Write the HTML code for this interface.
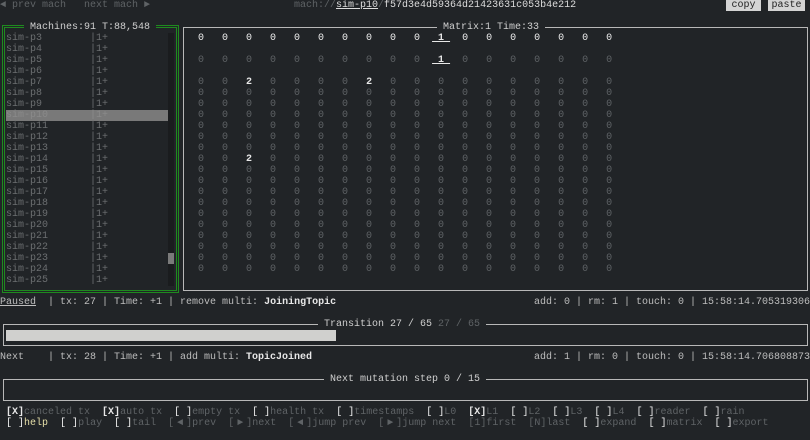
<!DOCTYPE html>
<html><head><meta charset="utf-8"><style>
body{margin:0;width:810px;height:440px;background:#212427;overflow:hidden;position:relative;font-family:"Liberation Mono",monospace;font-size:10px;line-height:11px;color:#bdbdbd}
.t{position:absolute;white-space:pre;}
.d{color:#5f6366}
.dm{color:#6b6e70}
.w{color:#e8e8e8;font-weight:bold}
.b{color:#f0f0f0}
.u{text-decoration:underline}
.a{display:inline-block;width:12px;text-align:center}
.box{position:absolute;border:1px solid #b8b8b8;box-sizing:border-box}
.ttl{position:absolute;background:#212427;white-space:pre;color:#cfcfcf;padding:0 6px}
.btn{position:absolute;background:#d4d4d4;color:#222;white-space:pre;height:11px}
</style></head><body>
<div class="t d" style="left:0;top:0">◄ prev mach   next mach ►</div>
<div class="t" style="left:294px;top:0"><span class="d">mach://</span><span class="u" style="color:#ddd">sim-p10</span><span class="d">/</span><span style="color:#ddd">f57d3e4d59364d21423631c053b4e212</span></div>
<div class="btn" style="left:726px;top:0;width:35px;text-align:center">copy</div>
<div class="btn" style="left:768px;top:0;width:37px;text-align:center">paste</div>

<div style="position:absolute;left:2px;top:25px;width:177px;height:268px;border:3px double #1f8a1f;box-sizing:border-box"></div>
<div class="ttl" style="left:24px;top:22px">Machines:91 T:88,548</div>
<div style="position:absolute;left:6px;top:110px;width:162px;height:11px;background:#797979"></div>
<div style="position:absolute;left:168px;top:33px;width:6px;height:253px;background:#1a1c1e"></div>
<div style="position:absolute;left:168px;top:253px;width:6px;height:11px;background:#7a7a7a"></div>
<div class="t dm" style="left:6px;top:33px">sim-p3        |1+
sim-p4        |1+
sim-p5        |1+
sim-p6        |1+
sim-p7        |1+
sim-p8        |1+
sim-p9        |1+
<span style="color:#8a8a8a">sim-p10       |1+</span>
sim-p11       |1+
sim-p12       |1+
sim-p13       |1+
sim-p14       |1+
sim-p15       |1+
sim-p16       |1+
sim-p17       |1+
sim-p18       |1+
sim-p19       |1+
sim-p20       |1+
sim-p21       |1+
sim-p22       |1+
sim-p23       |1+
sim-p24       |1+
sim-p25       |1+</div>

<div class="box" style="left:183px;top:27px;width:625px;height:264px"></div>
<div class="ttl" style="left:437px;top:22px">Matrix:1 Time:33</div>
<div class="t" style="left:168px;top:33px"><span class="b">     0   0   0   0   0   0   0   0   0   0  <span class="u w"> 1 </span>  0   0   0   0   0   0   0</span>

<span class="d">     0   0   0   0   0   0   0   0   0   0  <span class="u w"> 1 </span>  0   0   0   0   0   0   0</span>

<span class="d">     0   0   <span class="w">2</span>   0   0   0   0   <span class="w">2</span>   0   0   0   0   0   0   0   0   0   0
     0   0   0   0   0   0   0   0   0   0   0   0   0   0   0   0   0   0
     0   0   0   0   0   0   0   0   0   0   0   0   0   0   0   0   0   0
     0   0   0   0   0   0   0   0   0   0   0   0   0   0   0   0   0   0
     0   0   0   0   0   0   0   0   0   0   0   0   0   0   0   0   0   0
     0   0   0   0   0   0   0   0   0   0   0   0   0   0   0   0   0   0
     0   0   0   0   0   0   0   0   0   0   0   0   0   0   0   0   0   0
     0   0   <span class="w">2</span>   0   0   0   0   0   0   0   0   0   0   0   0   0   0   0
     0   0   0   0   0   0   0   0   0   0   0   0   0   0   0   0   0   0
     0   0   0   0   0   0   0   0   0   0   0   0   0   0   0   0   0   0
     0   0   0   0   0   0   0   0   0   0   0   0   0   0   0   0   0   0
     0   0   0   0   0   0   0   0   0   0   0   0   0   0   0   0   0   0
     0   0   0   0   0   0   0   0   0   0   0   0   0   0   0   0   0   0
     0   0   0   0   0   0   0   0   0   0   0   0   0   0   0   0   0   0
     0   0   0   0   0   0   0   0   0   0   0   0   0   0   0   0   0   0
     0   0   0   0   0   0   0   0   0   0   0   0   0   0   0   0   0   0
     0   0   0   0   0   0   0   0   0   0   0   0   0   0   0   0   0   0
     0   0   0   0   0   0   0   0   0   0   0   0   0   0   0   0   0   0</span></div>

<div class="t" style="left:0;top:297px"><span class="u">Paused</span>  | tx: 27 | Time: +1 | remove multi: <span class="w">JoiningTopic</span></div>
<div class="t" style="left:534px;top:297px">add: 0 | rm: 1 | touch: 0 | 15:58:14.705319306</div>

<div class="box" style="left:3px;top:324px;width:805px;height:22px"></div>
<div class="ttl" style="left:318px;top:319px">Transition 27 / 65 <span class="d">27 / 65</span></div>
<div style="position:absolute;left:6px;top:330px;width:330px;height:11px;background:#d0d0ce"></div>

<div class="t" style="left:0;top:352px">Next    | tx: 28 | Time: +1 | add multi: <span class="w">TopicJoined</span></div>
<div class="t" style="left:534px;top:352px">add: 1 | rm: 0 | touch: 0 | 15:58:14.706808873</div>

<div class="box" style="left:3px;top:379px;width:805px;height:22px"></div>
<div class="ttl" style="left:324px;top:374px">Next mutation step 0 / 15</div>

<div class="t" style="left:6px;top:407px"><span class="w">[X]</span><span class="d">canceled tx</span>  <span class="w">[X]</span><span class="d">auto tx</span>  <span class="b">[ ]</span><span class="d">empty tx</span>  <span class="b">[ ]</span><span class="d">health tx</span>  <span class="b">[ ]</span><span class="d">timestamps</span>  <span class="b">[ ]</span><span class="d">L0</span>  <span class="w">[X]</span><span class="d">L1</span>  <span class="b">[ ]</span><span class="d">L2</span>  <span class="b">[ ]</span><span class="d">L3</span>  <span class="b">[ ]</span><span class="d">L4</span>  <span class="b">[ ]</span><span class="d">reader</span>  <span class="b">[ ]</span><span class="d">rain</span>
<span class="b">[ ]</span><span style="color:#e6dfa8">help</span>  <span class="b">[ ]</span><span class="d">play</span>  <span class="b">[ ]</span><span class="d">tail</span>  <span class="d">[<span class="a">◄</span>]prev</span>  <span class="d">[<span class="a">►</span>]next</span>  <span class="d">[<span class="a">◄</span>]jump prev</span>  <span class="d">[<span class="a">►</span>]jump next</span>  <span class="d">[1]first</span>  <span class="d">[N]last</span>  <span class="b">[ ]</span><span class="d">expand</span>  <span class="b">[ ]</span><span class="d">matrix</span>  <span class="b">[ ]</span><span class="d">export</span></div>
</body></html>
